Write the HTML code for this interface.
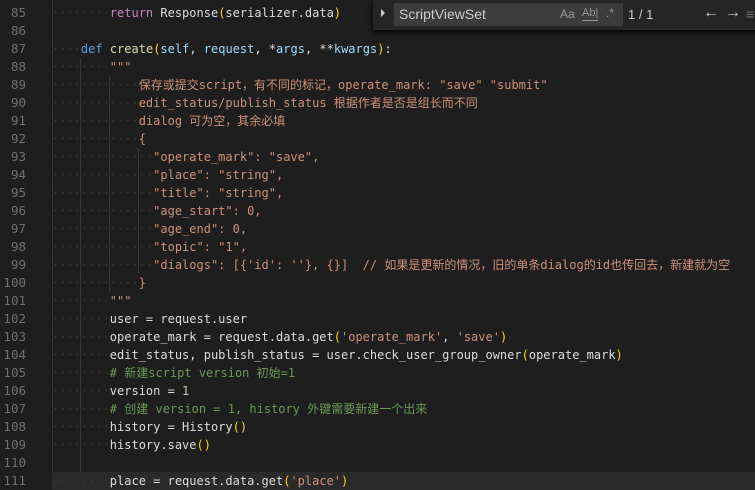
<!DOCTYPE html>
<html><head><meta charset="utf-8"><style>
body{margin:0;width:755px;height:486px;background:#1e1e1e;overflow:hidden;position:relative;font-family:"DejaVu Sans Mono","Noto Sans CJK SC",monospace;font-size:12px;}
.ln{position:absolute;left:0;width:26px;text-align:right;color:#707070;height:18px;line-height:18px;font-size:12.5px}
.cd{position:absolute;left:52px;white-space:pre;color:#dcdcdc;height:18px;line-height:18px;right:0}
.d{color:#383838}.k{color:#c586c0}.b{color:#569cd6}.f{color:#dcdcaa}.p{color:#9cdcfe}.s{color:#ce9178}.c{color:#6a9955}.n{color:#b5cea8}.y{color:#ffd700}
.g{position:absolute;width:1px;background:#383838}
.fw{position:absolute;left:373px;top:0;width:390px;height:30px;background:#252526;box-shadow:0 2px 6px #000;font-family:"Liberation Sans",sans-serif;color:#ccc}
</style></head><body>
<div class="g" style="left:52px;top:0;height:486px;background:#333"></div>
<div class="g" style="left:80px;top:58px;height:428px"></div>
<div class="g" style="left:109px;top:76px;height:216px"></div>
<div class="g" style="left:138px;top:148px;height:126px"></div>
<div style="position:absolute;left:52px;top:472px;width:703px;height:18px;background:#2a2a2a"></div>
<div id="c"></div>
<div class="fw">
<div style="position:absolute;left:8px;top:9px;width:0;height:0;border-left:4px solid #ccc;border-top:4px solid transparent;border-bottom:4px solid transparent"></div>
<div style="position:absolute;left:21px;top:3px;width:229px;height:23px;background:#3c3c3c"></div>
<div style="position:absolute;left:26px;top:6px;font-size:14px">ScriptViewSet</div>
<div style="position:absolute;left:187px;top:7px;font-size:12px;color:#999">Aa</div>
<div style="position:absolute;left:209px;top:7px;font-size:11px;color:#999;border-bottom:1px solid #999;line-height:13px">Ab|</div>
<div style="position:absolute;left:233px;top:6px;font-size:12px;color:#999">.*</div>
<div style="position:absolute;left:255px;top:7px;font-size:13px">1 / 1</div>
<div style="position:absolute;left:330px;top:4px;font-size:16px">←</div>
<div style="position:absolute;left:352px;top:4px;font-size:16px">→</div>
<div style="position:absolute;left:373px;top:6px;font-size:14px;color:#777">≡</div>
</div>
<script>
const L=[
[85,8,'<span class="k">return</span> Response<span class="y">(</span>serializer.data<span class="y">)</span>'],
[86,0,''],
[87,4,'<span class="b">def</span> <span class="f">create</span><span class="y">(</span><span class="p">self</span>, <span class="p">request</span>, *<span class="p">args</span>, **<span class="p">kwargs</span><span class="y">)</span>:'],
[88,8,'<span class="s">"""</span>'],
[89,12,'<span class="s">保存或提交script，有不同的标记，operate_mark: "save" "submit"</span>'],
[90,12,'<span class="s">edit_status/publish_status 根据作者是否是组长而不同</span>'],
[91,12,'<span class="s">dialog 可为空，其余必填</span>'],
[92,12,'<span class="s">{</span>'],
[93,14,'<span class="s">"operate_mark": "save",</span>'],
[94,14,'<span class="s">"place": "string",</span>'],
[95,14,'<span class="s">"title": "string",</span>'],
[96,14,'<span class="s">"age_start": 0,</span>'],
[97,14,'<span class="s">"age_end": 0,</span>'],
[98,14,'<span class="s">"topic": "1",</span>'],
[99,14,'<span class="s">"dialogs": [{\'id\': \'\'}, {}]  // 如果是更新的情况，旧的单条dialog的id也传回去，新建就为空</span>'],
[100,12,'<span class="s">}</span>'],
[101,8,'<span class="s">"""</span>'],
[102,8,'user = request.user'],
[103,8,'operate_mark = request.data.get<span class="y">(</span><span class="s">\'operate_mark\'</span>, <span class="s">\'save\'</span><span class="y">)</span>'],
[104,8,'edit_status, publish_status = user.check_user_group_owner<span class="y">(</span>operate_mark<span class="y">)</span>'],
[105,8,'<span class="c"># 新建script version 初始=1</span>'],
[106,8,'version = <span class="n">1</span>'],
[107,8,'<span class="c"># 创建 version = 1, history 外键需要新建一个出来</span>'],
[108,8,'history = History<span class="y">()</span>'],
[109,8,'history.save<span class="y">()</span>'],
[110,0,''],
[111,8,'place = request.data.get<span class="y">(</span><span class="s">\'place\'</span><span class="y">)</span>']];
let h='';
for(const [n,i,t] of L){const top=4+(n-85)*18;
h+=`<div class="ln" style="top:${top}px">${n}</div><div class="cd" style="top:${top}px"><span class="d">${'·'.repeat(i)}</span>${t}</div>`;}
document.getElementById('c').innerHTML=h;
</script>
</body></html>
